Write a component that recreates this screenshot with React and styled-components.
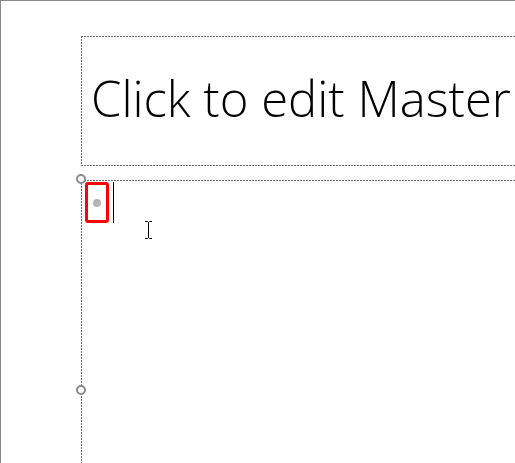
import React from "react"
import styled, { createGlobalStyle, css } from "styled-components"

const GlobalStyle = createGlobalStyle`
  html, body {
    margin: 0;
    padding: 0;
    background: #ffffff;
    overflow: hidden;
  }
  body {
    font-family: "Open Sans", "Liberation Sans", sans-serif;
  }
`

const dash = "#6a6a6a"

// dotted outline like PowerPoint placeholders: 2px on, 1px off
const dashedEdges = css`
  background-image:
    repeating-linear-gradient(to right, ${dash} 0 2px, transparent 2px 3px),
    repeating-linear-gradient(to bottom, ${dash} 0 2px, transparent 2px 3px),
    repeating-linear-gradient(to right, ${dash} 0 2px, transparent 2px 3px);
  background-repeat: no-repeat;
  background-size: 100% 1px, 1px 100%, 100% 1px;
  background-position: left top, left top, left bottom;
`

const Slide = styled.div`
  width: 515px;
  height: 463px;
  box-sizing: border-box;
  border-top: 1px solid #8a8a8a;
  border-left: 1px solid #8a8a8a;
  padding: 35px 0 0 80px;
  display: flex;
  flex-direction: column;
  gap: 14px;
  overflow: hidden;
`

const TitleBox = styled.div`
  ${dashedEdges}
  width: 560px;
  height: 130px;
  box-sizing: border-box;
  display: flex;
  align-items: center;
  padding: 0 0 6px 10px;
  flex-shrink: 0;
`

const TitleText = styled.div`
  font-family: "Open Sans", sans-serif;
  font-weight: 300;
  font-size: 49px;
  color: #000;
  white-space: nowrap;
`

const ContentBox = styled.div`
  position: relative;
  flex: 1;
  width: 560px;
  background-image:
    repeating-linear-gradient(to right, ${dash} 0 2px, transparent 2px 3px),
    repeating-linear-gradient(to bottom, ${dash} 0 2px, transparent 2px 3px);
  background-repeat: no-repeat;
  background-size: 100% 1px, 1px 100%;
  background-position: left top, left top;
  display: flex;
  align-items: flex-start;
  padding: 2px 0 0 4px;
  gap: 4px;
`

const Handle = styled.span`
  position: absolute;
  left: -5px;
  top: ${({ $top }) => $top}px;
  width: 6px;
  height: 6px;
  border: 2px solid #8a8a8a;
  border-radius: 50%;
  background: #ffffff;
`

const Highlight = styled.div`
  width: 18px;
  height: 35px;
  border: 3px solid #ff0000;
  border-radius: 3px;
  display: flex;
  align-items: center;
  justify-content: center;
`

const Bullet = styled.span`
  width: 8px;
  height: 8px;
  border-radius: 50%;
  background: #b4b4b4;
`

const Caret = styled.span`
  width: 1px;
  height: 41px;
  background: #000;
`

const MouseCursor = styled.svg`
  position: absolute;
  left: 63px;
  top: 41px;
`

export default function App() {
  return (
    <>
      <GlobalStyle />
      <Slide>
        <TitleBox>
          <TitleText>Click to edit Master</TitleText>
        </TitleBox>
        <ContentBox>
          <Handle $top={-6} />
          <Handle $top={205} />
          <Highlight>
            <Bullet />
          </Highlight>
          <Caret />
          <MouseCursor width="9" height="18" viewBox="0 0 9 18">
            <path d="M1 0.5h2.5l1 1l1-1H8M4.5 1.5v15M1 17.5h2.5l1-1l1 1H8" fill="none" stroke="#000" strokeWidth="1" />
          </MouseCursor>
        </ContentBox>
      </Slide>
    </>
  )
}
